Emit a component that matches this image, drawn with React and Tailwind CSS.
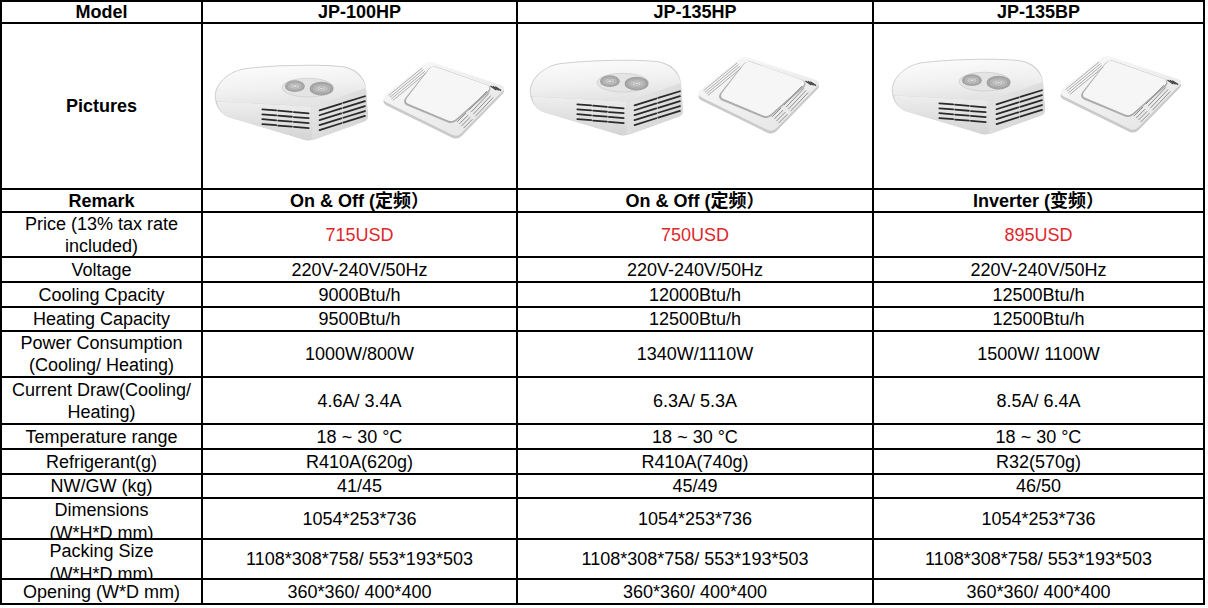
import React from "react";

function Products({ id }) {
  const slits1 = [55, 60, 65, 70];
  const slits2 = [56, 61, 66, 71, 76];
  return (
    <svg width="296" height="87" viewBox="0 0 300 88">
      <defs>
        <linearGradient id={`${id}top`} x1="0" y1="0" x2="0.3" y2="1">
          <stop offset="0" stopColor="#fdfdfd" />
          <stop offset="0.6" stopColor="#f1f1f1" />
          <stop offset="1" stopColor="#e4e4e4" />
        </linearGradient>
        <linearGradient id={`${id}front`} x1="0" y1="0" x2="0" y2="1">
          <stop offset="0" stopColor="#eeeeee" />
          <stop offset="1" stopColor="#d4d4d4" />
        </linearGradient>
        <linearGradient id={`${id}side`} x1="0" y1="0" x2="1" y2="1">
          <stop offset="0" stopColor="#e8e8e8" />
          <stop offset="1" stopColor="#d2d2d2" />
        </linearGradient>
        <linearGradient id={`${id}panel`} x1="0" y1="0" x2="1" y2="1">
          <stop offset="0" stopColor="#fafafa" />
          <stop offset="1" stopColor="#e4e4e4" />
        </linearGradient>
        <radialGradient id={`${id}grill`} cx="0.5" cy="0.5" r="0.5">
          <stop offset="0" stopColor="#e2e2e2" />
          <stop offset="0.75" stopColor="#b4b4b4" />
          <stop offset="1" stopColor="#999999" />
        </radialGradient>
      </defs>
      {/* unit body */}
      <path
        d="M2,44 C0,30 16,15 34,13 C70,9 110,9 130,11 C146,13 153,22 155,32 L157,62 C157,65 155,67 151,68 L104,85 C99,87 94,87 90,85 L16,63 C8,60 3,53 2,44 Z"
        fill="#d0d0d0"
      />
      {/* left front face */}
      <path d="M4,47 L100,52 L100,86 L94,86 L16,63 C9,60 5,54 4,47 Z" fill={`url(#${id}front)`} />
      {/* right face */}
      <path
        d="M100,52 C120,46 140,39 155,33 L157,62 C157,65 155,67 151,68 L104,85 C102,86 101,86 100,86 Z"
        fill={`url(#${id}side)`}
      />
      {/* top surface */}
      <path
        d="M3,45 C1,30 16,16 34,14 C70,10 110,10 130,12 C145,14 152,23 155,33 C140,39 120,46 100,52 L6,47 C4,47 3,46 3,45 Z"
        fill={`url(#${id}top)`}
      />
      {/* fan */}
      <ellipse cx="96" cy="33" rx="26" ry="9.5" fill="#e4e4e4" stroke="#cdcdcd" strokeWidth="0.8" />
      <ellipse cx="83" cy="31.5" rx="10" ry="6" fill={`url(#${id}grill)`} />
      {[7.5, 5, 2.5].map((r, k) => (
        <ellipse key={k} cx="83" cy="31.5" rx={r} ry={r * 0.6} fill="none" stroke="#8e8e8e" strokeWidth="0.45" />
      ))}
      <ellipse cx="110" cy="34" rx="12" ry="7" fill={`url(#${id}grill)`} />
      {[9.5, 7, 4.5, 2].map((r, k) => (
        <ellipse key={k} cx="110" cy="34" rx={r} ry={r * 0.58} fill="none" stroke="#8e8e8e" strokeWidth="0.45" />
      ))}
      {/* vents left front */}
      {slits1.map((y, i) => (
        <g key={i} stroke="#2a2a2a" strokeWidth="1.8" strokeLinecap="round">
          <line x1="50" y1={y} x2="64" y2={y + 1.1} />
          <line x1="66" y1={y + 1.4} x2="80" y2={y + 2.5} />
          <line x1="82" y1={y + 2.8} x2="97" y2={y + 4} />
        </g>
      ))}
      {/* vents right face */}
      {slits2.map((y, i) => (
        <g key={i} stroke="#2a2a2a" strokeWidth="1.8" strokeLinecap="round">
          <line x1="108" y1={y} x2="130" y2={y - 6.9} />
          <line x1="132" y1={y - 7.5} x2="154" y2={y - 14.3} />
        </g>
      ))}
      {/* panel edge */}
      <path
        d="M175,43 L214,11 Q218,8 223,9.5 L291,33 Q297,35 294,39 L252,82 Q248,86 243,84 L176,51 Q170,48 175,43 Z"
        fill="#cacaca"
      />
      {/* panel face */}
      <path
        d="M175,40 L214,9 Q218,6 223,7.5 L291,30 Q297,32 294,36 L252,79 Q248,83 243,81 L176,48 Q170,45 175,40 Z"
        fill={`url(#${id}panel)`}
      />
      {/* inner square shadow */}
      <path
        d="M196,44 L219,15 Q222,12 226,13 L277,31 Q282,33 279,37 L246,66 Q242,69 238,67 L197,50 Q193,48 196,44 Z"
        fill="none"
        stroke="#adadad"
        strokeWidth="2.2"
      />
      <path
        d="M197,43 L219,14 Q222,11 226,12 L277,30 Q282,32 279,36 L246,65 Q242,68 238,66 L198,49 Q194,47 197,43 Z"
        fill="#f6f6f6"
      />
      {/* top-left edge vents */}
      {[0, 1, 2, 3].map((i) => (
        <line
          key={i}
          x1={178 + 1.4 * i}
          y1={41 + 1.7 * i}
          x2={212 + 1.4 * i}
          y2={13 + 1.7 * i}
          stroke="#9a9a9a"
          strokeWidth="0.8"
        />
      ))}
      {/* right vents */}
      {[0, 1, 2].map((i) => (
        <line
          key={`a${i}`}
          x1={286 - 2.4 * i}
          y1={32 - 0.3 * i}
          x2={292 - 2.4 * i}
          y2={36 - 0.3 * i}
          stroke="#444"
          strokeWidth="1.3"
        />
      ))}
      {[0, 1, 2, 3].map((i) => (
        <g key={`b${i}`} stroke="#8c8c8c" strokeWidth="1">
          <line x1={284 - 2.2 * i} y1={43 - 2.1 * i} x2={266 - 2.2 * i} y2={62 - 2.1 * i} />
          <line x1={263 - 2.2 * i} y1={65 - 2.1 * i} x2={254 - 2.2 * i} y2={74 - 2.1 * i} />
        </g>
      ))}
    </svg>
  );
}

const cellBase = "flex items-center justify-center overflow-hidden bg-white text-center leading-[22px]";
const cellTop = "flex items-start justify-center overflow-hidden bg-white text-center leading-[23px]";

function Lines({ text }) {
  const parts = text.split("\n");
  return (
    <span>
      {parts.map((p, i) => (
        <React.Fragment key={i}>
          {i > 0 && <br />}
          {p}
        </React.Fragment>
      ))}
    </span>
  );
}

const rows = [
  { h: "Price (13% tax rate\nincluded)", v: ["715USD", "750USD", "895USD"], red: true },
  { h: "Voltage", v: ["220V-240V/50Hz", "220V-240V/50Hz", "220V-240V/50Hz"] },
  { h: "Cooling Cpacity", v: ["9000Btu/h", "12000Btu/h", "12500Btu/h"] },
  { h: "Heating Capacity", v: ["9500Btu/h", "12500Btu/h", "12500Btu/h"] },
  { h: "Power Consumption\n(Cooling/ Heating)", v: ["1000W/800W", "1340W/1110W", "1500W/ 1100W"] },
  { h: "Current Draw(Cooling/\nHeating)", v: ["4.6A/ 3.4A", "6.3A/ 5.3A", "8.5A/ 6.4A"] },
  { h: "Temperature range", v: ["18 ~ 30 °C", "18 ~ 30 °C", "18 ~ 30 °C"] },
  { h: "Refrigerant(g)", v: ["R410A(620g)", "R410A(740g)", "R32(570g)"] },
  { h: "NW/GW (kg)", v: ["41/45", "45/49", "46/50"] },
  { h: "Dimensions\n(W*H*D mm)", v: ["1054*253*736", "1054*253*736", "1054*253*736"], clip: true },
  {
    h: "Packing Size\n(W*H*D mm)",
    v: ["1108*308*758/ 553*193*503", "1108*308*758/ 553*193*503", "1108*308*758/ 553*193*503"],
    clip: true,
  },
  { h: "Opening (W*D mm)", v: ["360*360/ 400*400", "360*360/ 400*400", "360*360/ 400*400"] },
];

export default function App() {
  return (
    <div className="min-h-[608px] bg-white">
      <div className="grid w-fit grid-cols-[199px_313px_354px_329px] grid-rows-[20px_164px_21px_43px_23px_23px_22px_44px_45px_23px_23px_22px_39px_38px_23px] gap-[2px] bg-black p-[2px] font-['Liberation_Sans','Noto_Sans_CJK_SC',sans-serif] text-[18px] text-black">
        {/* header */}
        <div className={`${cellBase} font-bold leading-[20px]`}>Model</div>
        <div className={`${cellBase} font-bold leading-[20px]`}>JP-100HP</div>
        <div className={`${cellBase} font-bold leading-[20px]`}>JP-135HP</div>
        <div className={`${cellBase} font-bold leading-[20px]`}>JP-135BP</div>

        {/* pictures */}
        <div className={`${cellBase} font-bold`}>Pictures</div>
        <div className="flex items-start overflow-hidden bg-white pl-[10px] pt-[31px]">
          <Products id="p1" />
        </div>
        <div className="flex items-start overflow-hidden bg-white pl-[10px] pt-[26px]">
          <Products id="p2" />
        </div>
        <div className="flex items-start overflow-hidden bg-white pl-[16px] pt-[25px]">
          <Products id="p3" />
        </div>

        {/* remark */}
        <div className={`${cellBase} font-bold leading-[21px]`}>Remark</div>
        <div className={`${cellBase} font-bold leading-[21px]`}>On &amp; Off (定频）</div>
        <div className={`${cellBase} font-bold leading-[21px]`}>On &amp; Off (定频）</div>
        <div className={`${cellBase} font-bold leading-[21px]`}>Inverter (变频）</div>

        {rows.map((r, i) => (
          <React.Fragment key={i}>
            <div className={r.clip ? cellTop : cellBase}>
              <Lines text={r.h} />
            </div>
            {r.v.map((v, j) => (
              <div key={j} className={r.red ? `${cellBase} text-[#e0262a]` : cellBase}>
                {v}
              </div>
            ))}
          </React.Fragment>
        ))}
      </div>
    </div>
  );
}
